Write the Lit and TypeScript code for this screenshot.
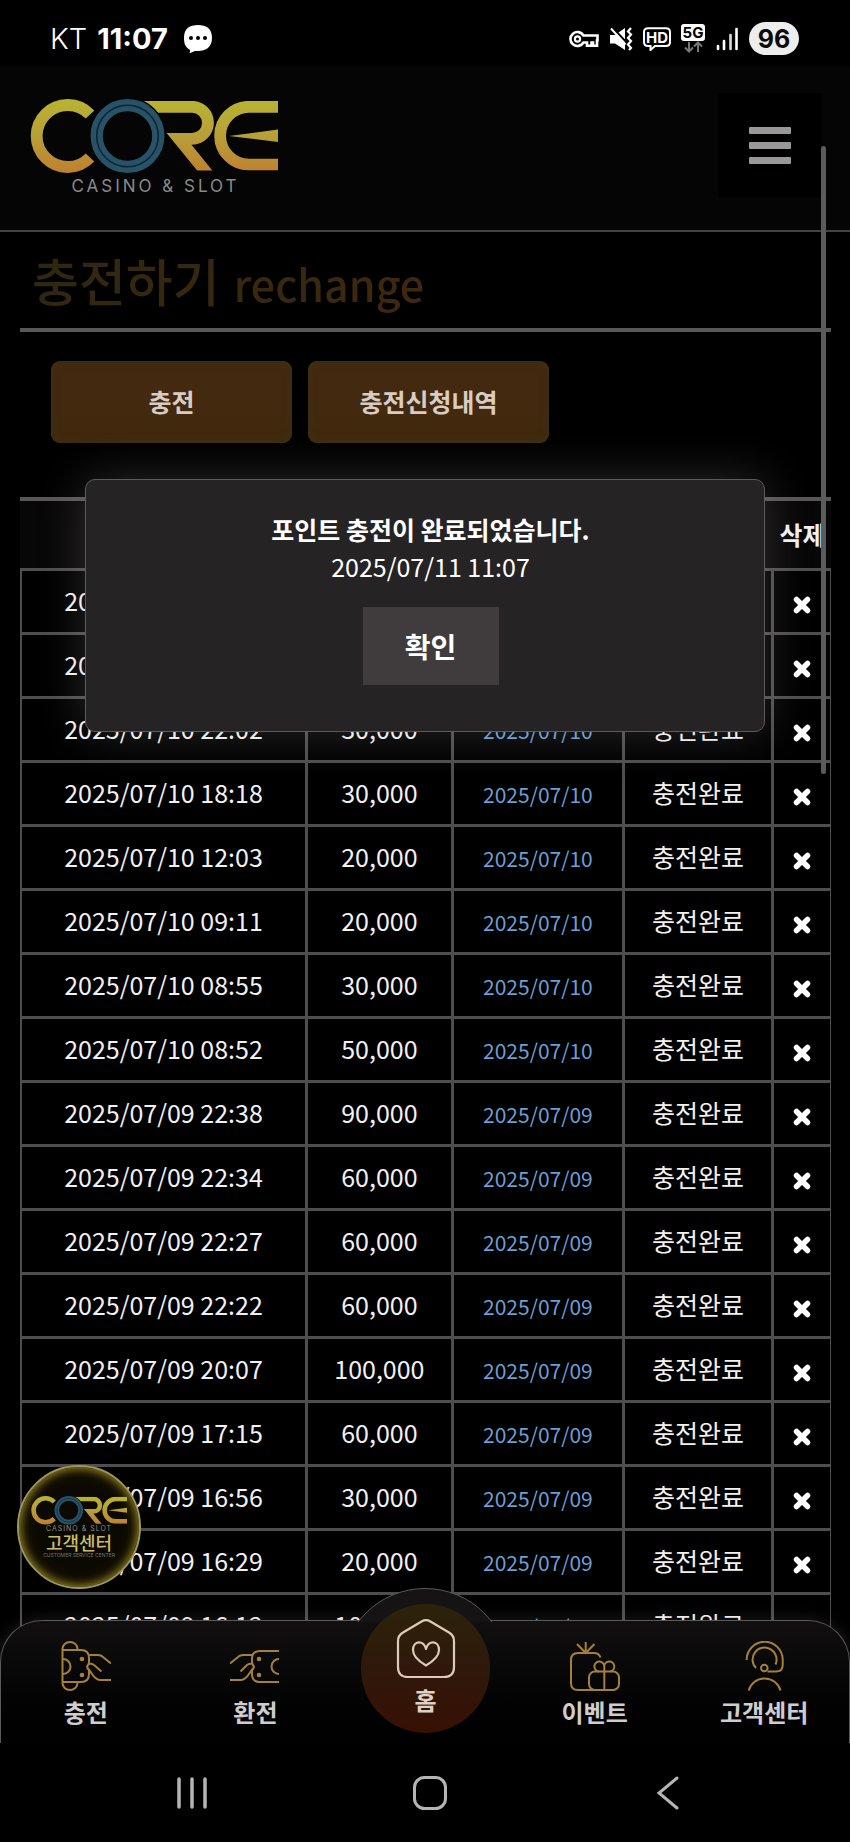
import { LitElement, html, css, svg } from "lit";
import { customElement, property } from "lit/decorators.js";

interface Row {
  requested: string;
  amount?: string;
  processed?: string;
  state?: string;
}

const done = (requested: string, amount: string): Row => ({
  requested,
  amount,
  processed: requested.slice(0, 10),
  state: "충전완료",
});

const ROWS: Row[] = [
  { requested: "2025/07/11 11:06" },
  { requested: "2025/07/10 23:15" },
  done("2025/07/10 22:02", "30,000"),
  done("2025/07/10 18:18", "30,000"),
  done("2025/07/10 12:03", "20,000"),
  done("2025/07/10 09:11", "20,000"),
  done("2025/07/10 08:55", "30,000"),
  done("2025/07/10 08:52", "50,000"),
  done("2025/07/09 22:38", "90,000"),
  done("2025/07/09 22:34", "60,000"),
  done("2025/07/09 22:27", "60,000"),
  done("2025/07/09 22:22", "60,000"),
  done("2025/07/09 20:07", "100,000"),
  done("2025/07/09 17:15", "60,000"),
  done("2025/07/09 16:56", "30,000"),
  done("2025/07/09 16:29", "20,000"),
  done("2025/07/09 16:12", "100,000"),
];

@customElement("status-bar")
export class StatusBar extends LitElement {
  static styles = css`
    :host {
      display: flex;
      align-items: center;
      justify-content: space-between;
      flex: none;
      height: 66px;
      box-sizing: border-box;
      padding: 11px 51px 0 50px;
      background: #000;
      color: #fff;
      font-family: Inter, "Noto Sans CJK KR", sans-serif;
    }
    .group {
      display: flex;
      align-items: center;
      gap: 10px;
    }
    .carrier {
      font-size: 29px;
      font-weight: 300;
    }
    .clock {
      font-size: 29px;
      font-weight: 700;
    }
    .chat {
      margin-left: 6px;
    }
    svg {
      display: block;
      flex: none;
    }
    .battery {
      display: flex;
      align-items: center;
      justify-content: center;
      width: 50px;
      height: 33px;
      border-radius: 17px;
      background: #ededed;
      color: #0a0a0a;
      font-size: 25px;
      font-weight: 700;
    }
  `;

  render() {
    return html`
      <div class="group">
        <span class="carrier">KT</span>
        <span class="clock">11:07</span>
        <svg class="chat" width="28" height="28" viewBox="0 0 28 28">
          <path d="M14 0C22 0 28 3 28 13C28 22 22 26 14 26H11L5 28.500Q7 26 5.500 24.500C1 22 0 18 0 13C0 3 6 0 14 0Z" fill="#fff" />
          <circle cx="7" cy="13" r="2" /><circle cx="14" cy="13" r="2" /><circle cx="21" cy="13" r="2" />
        </svg>
      </div>
      <div class="group">
        <svg width="30" height="18" viewBox="0 0 30 18" fill="none" stroke="#fff" stroke-width="2.600">
          <path d="M14.500 5.500A7 7 0 1 0 14.500 12.500H18V15.700H22.500V12.500H24V15.700H28V10.500H28.500V5.500Z" />
          <circle cx="8.500" cy="9" r="2.600" stroke-width="2.200" />
        </svg>
        <svg width="24" height="24" viewBox="0 0 24 24" fill="none" stroke="#fff">
          <path d="M1 8H6L16 1V23L6 16.500H1Z" fill="#fff" stroke="none" />
          <path d="M4 1L17 15" stroke="#000" stroke-width="2" />
          <path d="M2 1.500L16.500 17.500" stroke-width="2" />
          <path d="M22 1L19 4.500L22 7.500L19 11L22 14L19 17.500L22 21L20 23" stroke-width="2.200" />
        </svg>
        <svg width="28" height="24" viewBox="0 0 28 24" fill="none" stroke="#fff">
          <path d="M5 1.200H23Q27 1.200 27 5V15Q27 19 23 19H12L7.500 23V19H5Q1 19 1 15V5Q1 1.200 5 1.200Z" stroke-width="2" />
          <text x="14" y="15.500" text-anchor="middle" font-size="15" font-weight="700" fill="#fff" stroke="none">HD</text>
        </svg>
        <svg width="24" height="32" viewBox="0 0 24 32">
          <rect x="0" y="1" width="24" height="17" rx="3" fill="#fff" />
          <text x="12" y="15" text-anchor="middle" font-size="15" font-weight="700">5G</text>
          <path d="M8 19V28M4 24.500L8 28.500L12 24.500M17 29V20M13 23.500L17 19.500L21 23.500" fill="none" stroke="#777" stroke-width="2" />
        </svg>
        <svg width="24" height="24" viewBox="0 0 24 24" stroke="#fff" stroke-width="2.600" stroke-linecap="round">
          <path d="M3 19V22" /><path d="M9 14V22" /><path d="M15.500 8V22" stroke="#ddd" /><path d="M21.500 2V22" />
        </svg>
        <span class="battery">96</span>
      </div>
    `;
  }
}

@customElement("core-mark")
export class CoreMark extends LitElement {
  static styles = css`
    :host {
      display: block;
    }
    svg {
      display: block;
      width: 100%;
      height: auto;
    }
  `;

  render() {
    return html`
      <svg viewBox="0 0 248 74" role="img" aria-label="CORE">
        <defs>
          <linearGradient id="gold" gradientUnits="userSpaceOnUse" x1="0" y1="0" x2="0" y2="74">
            <stop offset="0" stop-color="#b8b432" />
            <stop offset="0.500" stop-color="#b89f38" />
            <stop offset="1" stop-color="#bf7f30" />
          </linearGradient>
          <clipPath id="band"><rect x="0" y="2" width="248" height="69.500" /></clipPath>
        </defs>
        <g fill="none" stroke="url(#gold)" stroke-width="11.800">
          <path d="M60 15.500A31 31 0 1 0 60 58.500" />
          <g clip-path="url(#band)">
            <path d="M112 7.800H162A16 16 0 0 1 162 39.800H149L180 78" />
            <path d="M248 7.800H219A28.900 28.900 0 0 0 219 65.600H248" />
          </g>
        </g>
        <path d="M199 37L248 30.500V43Z" fill="url(#gold)" />
        <circle cx="97.500" cy="37" r="32" fill="none" stroke="#050505" stroke-width="13" />
        <circle cx="97.500" cy="37" r="30.800" fill="none" stroke="#275268" stroke-width="12.300" />
        <circle cx="97.500" cy="37" r="30.800" fill="none" stroke="#0b2430" stroke-width="1.500" />
      </svg>
    `;
  }
}

@customElement("tab-icon")
export class TabIcon extends LitElement {
  @property() name = "";

  static styles = css`
    :host {
      display: block;
    }
    svg {
      display: block;
    }
  `;

  private shape() {
    switch (this.name) {
      case "deposit":
        return svg`
          <path d="M1.500 9V8A7.500 7 0 0 1 16.500 8V9M1.500 7V43M1.500 41V42A7.500 7 0 0 0 16.500 42V41" />
          <path d="M1.500 9H20Q28 9 28 17V22L26 26L28 29V33Q28 41 20 41H1.500" />
          <path d="M2 18A7.500 7.500 0 0 1 2 33" />
          <path d="M28 14H37Q40 14 42 16L50 22.500M28 23Q31 22 33 24L40.500 30.500M26 27C30 29 32 39 39 39H50" />
          <circle cx="21" cy="18" r="1.300" fill="#a5803a" /><circle cx="21" cy="34" r="1.300" fill="#a5803a" />`;
      case "withdraw":
        return svg`
          <path d="M49 10H30Q22 10 22 18V22L24 26L22 29V33Q22 41 30 41H49" />
          <path d="M49 18A7.500 7.500 0 1 0 49 33" />
          <path d="M22 14H13Q10 14 8 16L0 22.500M22 23Q19 22 17 24L10.500 30.500M24 27C20 29 18 39 11 39H0" />
          <circle cx="29" cy="18" r="1.300" fill="#a5803a" /><circle cx="29" cy="34" r="1.300" fill="#a5803a" />`;
      case "event":
        return svg`
          <path d="M30.500 16.500Q29 12 24 12H8Q1 12 1 19V42Q1 49 8 49H44" />
          <path d="M15.700 1V12M7 3L15.700 12L24.500 3" />
          <rect x="19" y="30.500" width="30" height="18.500" rx="6" />
          <path d="M34.300 30.500V49" />
          <path d="M34.300 30V26A5 5 0 1 0 29 30.500M34.300 30V26A5 5 0 1 1 40 30.500" />`;
      case "support":
        return svg`
          <path d="M7.700 19A18 18 0 1 1 43.700 18.500V24Q43.700 30.500 37 30.500H28.500" />
          <path d="M17 27A12 12 0 1 1 36.500 23.500" />
          <circle cx="25.300" cy="27" r="3.300" />
          <path d="M9.700 49.500A16.500 16.500 0 0 1 41.500 49.500" />`;
      default:
        return svg``;
    }
  }

  render() {
    if (this.name === "home") {
      return html`<svg width="60" height="60" viewBox="0 0 60 60" fill="none" stroke="#dccbb8" stroke-width="2.200" stroke-linejoin="round">
        <path d="M26 2.200Q30 0 34 2.200L53 13.500Q58 16.500 58 22V48Q58 58 48 58H12Q2 58 2 48V22Q2 16.500 7 13.500Z" />
        <path d="M30 30C28 21 17 21 17 31C17 37 24 43 30 46.500C36 43 43 37 43 31C43 21 32 21 30 30Z" />
      </svg>`;
    }
    return html`<svg width="50" height="50" viewBox="0 0 50 50" fill="none" stroke="#a5803a" stroke-width="2">${this.shape()}</svg>`;
  }
}

@customElement("app-root")
export class AppRoot extends LitElement {
  static styles = css`
    :host {
      display: flex;
      flex-direction: column;
      height: 100vh;
      overflow: hidden;
      background: #000;
      color: #f2f0f0;
      font-family: "Noto Sans CJK KR", "Noto Sans", sans-serif;
    }
    button {
      font: inherit;
      color: inherit;
      border: 0;
      padding: 0;
      cursor: pointer;
    }
    a {
      color: inherit;
      text-decoration: none;
    }
    .app {
      position: relative;
      flex: 1;
      min-height: 0;
      overflow: hidden;
    }
    .header {
      display: flex;
      align-items: flex-start;
      justify-content: space-between;
      height: 137px;
      padding: 27px 28px 0 30px;
      background: #050505;
      border-bottom: 2px solid #424242;
    }
    .brand {
      display: flex;
      flex-direction: column;
      align-items: center;
      width: 248px;
      padding-top: 6px;
    }
    .brand core-mark {
      width: 100%;
    }
    .caption {
      margin-top: 2px;
      padding-left: 3px;
      color: #8a8a8a;
      font-family: Inter, sans-serif;
      font-size: 17px;
      line-height: 22px;
      letter-spacing: 3px;
      white-space: nowrap;
    }
    .menu {
      display: flex;
      flex-direction: column;
      align-items: center;
      justify-content: center;
      gap: 8px;
      width: 104px;
      height: 104px;
      background: #000;
    }
    .bar {
      width: 42px;
      height: 7px;
      border-radius: 1px;
      background: #999797;
    }
    .content {
      padding: 0 19px 0 20px;
    }
    .title {
      display: flex;
      align-items: baseline;
      gap: 14px;
      margin: 0;
      padding: 8px 12px 0;
      height: 88px;
      border-bottom: 4px solid #585657;
      font-size: 51px;
      line-height: 80px;
      font-weight: 500;
      color: transparent;
      background: linear-gradient(90deg, #2f2711, #3e280f 50%);
      background-clip: text;
      -webkit-background-clip: text;
    }
    .sub {
      font-size: 43px;
    }
    .actions {
      display: flex;
      gap: 16px;
      padding: 29px 31px 54px;
    }
    .action {
      width: 241px;
      height: 82px;
      padding-bottom: 2px;
      border-radius: 9px;
      background: linear-gradient(#42290f, #42290f 60%, #40290c);
      box-shadow: inset 0 0 10px #3d3119;
      color: #d9cdc3;
      font-size: 25px;
      font-weight: 700;
    }
    table {
      width: 100%;
      table-layout: fixed;
      border-collapse: separate;
      border-spacing: 0;
      font-size: 25px;
      line-height: 36px;
      text-align: center;
    }
    .c-date { width: 35.5%; }
    .c-amount { width: 18%; }
    .c-processed { width: 21.1%; }
    .c-state { width: 18.4%; }
    .c-delete { width: 7%; }
    th {
      height: 65px;
      padding: 0 0 2px;
      border-top: 4px solid #585657;
      border-bottom: 3px solid #4f4e4e;
      background: #080707;
      font-weight: 700;
      white-space: nowrap;
    }
    td {
      height: 57px;
      padding: 0 0 4px;
      border-right: 3px solid #4f4e4e;
      border-bottom: 3px solid #4f4e4e;
      white-space: nowrap;
    }
    td:first-child {
      border-left: 2px solid #4f4e4e;
    }
    td:last-child {
      padding: 6px 0 0;
      height: 55px;
      border-right-width: 1px;
    }
    .processed {
      height: 61px;
      padding: 0;
      color: #6a9fd6;
      font-size: 21px;
    }
    .remove {
      display: block;
      margin: 0 auto;
      width: 18px;
      height: 18px;
      background: none;
    }
    .remove svg {
      display: block;
    }
    .scroll {
      position: absolute;
      top: 80px;
      right: 24px;
      width: 5px;
      height: 628px;
      border-radius: 3px;
      background: #5b5b5b;
    }
    .overlay {
      position: absolute;
      inset: 0;
      display: flex;
      align-items: flex-start;
      justify-content: center;
      padding-top: 413px;
    }
    .dialog {
      display: flex;
      flex-direction: column;
      align-items: center;
      width: 80%;
      padding: 31px 0 46px 11px;
      box-sizing: border-box;
      border: 1px solid #5c5a5b;
      border-radius: 10px;
      background: #262324;
      box-shadow: 0 0 48px rgba(200, 190, 195, 0.22);
      color: #fff;
      font-size: 25px;
      line-height: 37px;
    }
    .message {
      margin: 0;
      font-size: 25px;
      line-height: 37px;
      font-weight: 700;
    }
    .time {
      margin: 0 0 22px;
    }
    .confirm {
      width: 136px;
      height: 78px;
      background: #403c3d;
      font-size: 28px;
      font-weight: 700;
    }
    .badge {
      position: absolute;
      left: 17px;
      bottom: 154px;
      display: flex;
      flex-direction: column;
      align-items: center;
      width: 124px;
      height: 124px;
      padding-top: 29px;
      box-sizing: border-box;
      border-radius: 50%;
      border: 2px solid #9a985c;
      background: radial-gradient(circle, #0b0901 50%, #1c1603 80%, #3a2f08);
      box-shadow: inset 0 0 8px 2px #8f7f22;
    }
    .badge core-mark {
      width: 96px;
    }
    .tiny {
      font-family: Inter, sans-serif;
      font-size: 7px;
      line-height: 8px;
      letter-spacing: 1px;
      color: #8a8a82;
    }
    .care {
      font-size: 18px;
      line-height: 18px;
      font-weight: 500;
      color: #cdbb68;
    }
    .foot {
      font-family: Inter, sans-serif;
      font-size: 5px;
      line-height: 8px;
      color: #77756a;
    }
    .tabs {
      position: absolute;
      left: 0;
      right: 0;
      bottom: 0;
      display: grid;
      grid-template-columns: repeat(5, 1fr);
      height: 123px;
      box-sizing: border-box;
      border: 1px solid #5a5a5a;
      border-bottom: 0;
      border-radius: 42px 42px 0 0;
      background: linear-gradient(#110f10, #030303 65%, #000);
      box-shadow: 0 0 16px rgba(160, 150, 155, 0.2);
      color: #cfcdcd;
      font-size: 24px;
      line-height: 30px;
      font-weight: 700;
    }
    .tab {
      display: flex;
      flex-direction: column;
      align-items: center;
      gap: 6px;
      padding-top: 20px;
    }
    .hump {
      position: absolute;
      left: calc(50% - 84px);
      top: -33px;
      width: 168px;
      height: 34px;
      overflow: hidden;
    }
    .ring {
      width: 168px;
      height: 168px;
      box-sizing: border-box;
      border: 1px solid #5a5a5a;
      border-radius: 50%;
      background: #151314;
    }
    .home {
      position: absolute;
      left: calc(50% - 64px);
      top: -17px;
      display: flex;
      flex-direction: column;
      align-items: center;
      gap: 6px;
      width: 129px;
      height: 129px;
      padding-top: 15px;
      box-sizing: border-box;
      border-radius: 50%;
      background: linear-gradient(#2c230a, #2f180b 50%, #381004);
      color: #e0d0c4;
    }
    .system {
      display: flex;
      flex: none;
      align-items: center;
      justify-content: space-between;
      height: 99px;
      padding: 0 170px 0 175px;
      box-sizing: border-box;
      background: #000;
    }
    .key {
      background: none;
    }
    .key svg {
      display: block;
    }
  `;

  render() {
    return html`
      <status-bar></status-bar>
      <div class="app">
        <header class="header">
          <a class="brand" href="#">
            <core-mark></core-mark>
            <span class="caption">CASINO &amp; SLOT</span>
          </a>
          <button class="menu" aria-label="메뉴">
            <span class="bar"></span><span class="bar"></span><span class="bar"></span>
          </button>
        </header>
        <main class="content">
          <h1 class="title">충전하기 <span class="sub">rechange</span></h1>
          <div class="actions">
            <button class="action">충전</button>
            <button class="action">충전신청내역</button>
          </div>
          <table>
            <colgroup>
              <col class="c-date" /><col class="c-amount" /><col class="c-processed" /><col class="c-state" /><col class="c-delete" />
            </colgroup>
            <thead>
              <tr>
                <th aria-label="신청날짜"></th>
                <th aria-label="금액"></th>
                <th aria-label="처리날짜"></th>
                <th aria-label="상태"></th>
                <th>삭제</th>
              </tr>
            </thead>
            <tbody>
              ${ROWS.map(
                (row) => html`<tr>
                  <td>${row.requested}</td>
                  <td>${row.amount}</td>
                  <td class="processed">${row.processed}</td>
                  <td>${row.state}</td>
                  <td>
                    <button class="remove" aria-label="삭제">
                      <svg width="18" height="18" viewBox="0 0 18 18" stroke="#fff" stroke-width="5.500" stroke-linecap="round">
                        <path d="M3.500 3.500L14.500 14.500M14.500 3.500L3.500 14.500" />
                      </svg>
                    </button>
                  </td>
                </tr>`
              )}
            </tbody>
          </table>
        </main>
        <div class="overlay">
          <section class="dialog" role="dialog" aria-labelledby="message">
            <h2 class="message" id="message">포인트 충전이 완료되었습니다.</h2>
            <p class="time">2025/07/11 11:07</p>
            <button class="confirm">확인</button>
          </section>
        </div>
        <nav class="tabs">
          <div class="hump"><div class="ring"></div></div>
          <a class="tab" href="#"><tab-icon name="deposit"></tab-icon>충전</a>
          <a class="tab" href="#"><tab-icon name="withdraw"></tab-icon>환전</a>
          <span></span>
          <a class="tab" href="#"><tab-icon name="event"></tab-icon>이벤트</a>
          <a class="tab" href="#"><tab-icon name="support"></tab-icon>고객센터</a>
          <a class="home" href="#"><tab-icon name="home"></tab-icon>홈</a>
        </nav>
        <a class="badge" href="#">
          <core-mark></core-mark>
          <span class="tiny">CASINO &amp; SLOT</span>
          <span class="care">고객센터</span>
          <span class="foot">CUSTOMER SERVICE CENTER</span>
        </a>
        <div class="scroll"></div>
      </div>
      <div class="system">
        <button class="key" aria-label="최근 앱">
          <svg width="34" height="34" viewBox="0 0 34 34" stroke="#b5b5b5" stroke-width="3.500" stroke-linecap="round">
            <path d="M4 3V31M17 3V31M30 3V31" />
          </svg>
        </button>
        <button class="key" aria-label="홈 화면">
          <svg width="34" height="34" viewBox="0 0 34 34" fill="none" stroke="#b5b5b5" stroke-width="3">
            <rect x="1.500" y="1.500" width="31" height="31" rx="10" />
          </svg>
        </button>
        <button class="key" aria-label="뒤로">
          <svg width="30" height="34" viewBox="0 0 30 34" fill="none" stroke="#b5b5b5" stroke-width="3" stroke-linecap="round">
            <path d="M27 2L9 17L27 32" />
          </svg>
        </button>
      </div>
    `;
  }
}
